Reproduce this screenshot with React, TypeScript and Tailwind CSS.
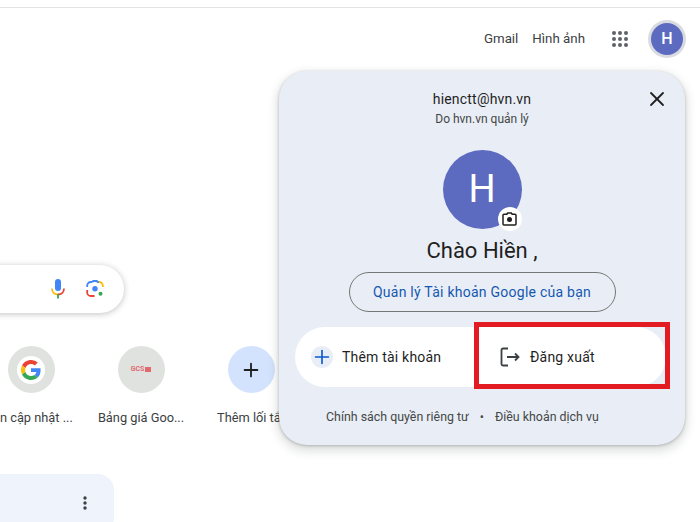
import { Plus, X } from "lucide-react"

const font = { fontFamily: "Roboto, sans-serif" }

function GoogleG({ size = 20 }: { size?: number }) {
  return (
    <svg width={size} height={size} viewBox="0 0 48 48">
      <path fill="#EA4335" d="M24 9.500c3.500 0 6.700 1.200 9.200 3.600l6.900-6.900C35.900 2.400 30.500 0 24 0 14.600 0 6.500 5.400 2.600 13.200l8 6.200C12.500 13.600 17.800 9.500 24 9.500z" />
      <path fill="#4285F4" d="M47 24.500c0-1.600-.1-3.100-.4-4.500H24v9h13c-.6 3-2.300 5.500-4.800 7.200l7.700 6C44.400 38 47 31.800 47 24.500z" />
      <path fill="#FBBC05" d="M10.600 28.600c-.5-1.500-.8-3-.8-4.600s.3-3.100.8-4.600l-8-6.200C.9 16.500 0 20.100 0 24s.9 7.500 2.600 10.800l8-6.200z" />
      <path fill="#34A853" d="M24 48c6.500 0 11.900-2.100 15.900-5.800l-7.700-6c-2.200 1.500-4.900 2.300-8.200 2.300-6.200 0-11.500-4.100-13.400-9.900l-8 6.200C6.500 42.600 14.600 48 24 48z" />
    </svg>
  )
}

function Mic() {
  return (
    <svg width="16" height="22" viewBox="0 0 16 22">
      <rect x="5" y="1" width="6" height="12" rx="3" fill="#4285F4" />
      <path d="M2 10.500c0 3.600 2.400 6 6 6" fill="none" stroke="#FBBC05" strokeWidth="1.800" />
      <path d="M14 10.500c0 3.600-2.400 6-6 6" fill="none" stroke="#EA4335" strokeWidth="1.800" />
      <rect x="7.100" y="16" width="1.800" height="4.500" fill="#34A853" />
    </svg>
  )
}

function Lens() {
  return (
    <svg width="18" height="18" viewBox="0 0 18 18" fill="none">
      <path d="M1.200 7V5.500A3.500 3.500 0 0 1 4.700 2h1.600" stroke="#4285F4" strokeWidth="1.800" />
      <path d="M6.300 2l1-1h3.400l1 1h1.200" stroke="#4285F4" strokeWidth="1.800" />
      <path d="M13 2a3.700 3.700 0 0 1 3.800 3.500V7" stroke="#FBBC05" strokeWidth="1.800" />
      <path d="M1.200 10v2.500A3.500 3.500 0 0 0 4.700 16h3.800" stroke="#EA4335" strokeWidth="1.800" />
      <circle cx="9" cy="8.800" r="2.700" fill="#4285F4" />
      <circle cx="14.500" cy="13.800" r="2" fill="#34A853" />
    </svg>
  )
}

function AppsGrid() {
  const dots = [3, 9, 15]
  return (
    <svg width="18" height="18" viewBox="0 0 18 18" fill="#5f6368">
      {dots.map((y) => dots.map((x) => <circle key={`${x}-${y}`} cx={x} cy={y} r="2" />))}
    </svg>
  )
}

function Camera() {
  return (
    <svg width="15" height="14" viewBox="0 0 15 14" fill="none">
      <path d="M4.800 2.300 5.700 1h3.600l.9 1.300H13a1 1 0 0 1 1 1V12a1 1 0 0 1-1 1H2a1 1 0 0 1-1-1V3.300a1 1 0 0 1 1-1h2.800z" stroke="#1f1f1f" strokeWidth="1.500" />
      <circle cx="7.500" cy="7.600" r="2.500" fill="#1f1f1f" />
    </svg>
  )
}

function SignOut() {
  return (
    <svg width="20" height="20" viewBox="0 0 20 20" fill="none" stroke="#3c4043" strokeWidth="1.800">
      <path d="M8 1.500H3A1.500 1.500 0 0 0 1.500 3v14A1.500 1.500 0 0 0 3 18.500h5" />
      <path d="M7 10h11.500M15 6.500l3.500 3.500-3.500 3.500" />
    </svg>
  )
}

function Shortcut({ label, children, bg }: { label: string; children: React.ReactNode; bg: string }) {
  return (
    <div className="flex w-[110px] shrink-0 flex-col items-center">
      <div className={`flex h-[47px] w-[47px] items-center justify-center rounded-full ${bg}`}>{children}</div>
      <div className="mt-[17px] w-[110px] whitespace-nowrap text-center text-[12.800px] leading-4 text-[#3c4043]">
        {label}
      </div>
    </div>
  )
}

export default function App() {
  return (
    <div className="relative h-[522px] w-[700px] overflow-hidden bg-white" style={font}>
      {/* top strip */}
      <div className="h-2 border-b border-[#e3e3e3]" />

      {/* header links */}
      <div className="flex h-[62px] items-center justify-end pr-[14px]">
        <span className="text-[13.300px] text-[#3c4043]">Gmail</span>
        <span className="ml-[14px] text-[13.300px] text-[#3c4043]">Hình ảnh</span>
        <span className="ml-[26px] flex">
          <AppsGrid />
        </span>
        <div className="ml-[19px] flex h-[38px] w-[38px] items-center justify-center rounded-full bg-[#d9dbe0]">
          <div className="flex h-[32px] w-[32px] items-center justify-center rounded-full bg-[#5c6bc0] text-[16px] font-medium text-white">
            H
          </div>
        </div>
      </div>

      {/* page content, cropped on the left */}
      <div className="ml-[-200px] w-[324px] pt-[195px]">
        <div className="flex h-[48px] items-center justify-end rounded-[24px] bg-white pr-[20px] shadow-[0_1px_6px_rgba(32,33,36,0.28)]">
          <Mic />
          <span className="ml-[20px] flex">
            <Lens />
          </span>
        </div>
      </div>

      <div className="ml-[-24px] mt-[33px] flex">
        <Shortcut label="Tin cập nhật ..." bg="bg-[#e0e2e0]">
          <span className="flex h-7 w-7 items-center justify-center rounded-full bg-white">
            <GoogleG size={20} />
          </span>
        </Shortcut>
        <Shortcut label="Bảng giá Goo..." bg="bg-[#e0e2e0]">
          <span className="flex items-center gap-[1px] text-[7px] font-bold leading-none text-[#e06a6e]">
            GCS
            <span className="h-[5px] w-[6px] bg-[#e06a6e]" />
          </span>
        </Shortcut>
        <Shortcut label="Thêm lối tắt" bg="bg-[#d3e3fd]">
          <Plus size={22} strokeWidth={2} className="text-[#1f1f1f]" />
        </Shortcut>
      </div>

      <div className="ml-[-40px] mt-[48px] flex h-[60px] w-[154px] justify-end rounded-[16px] bg-[#eff3fb] pr-[27px] pt-[22px]">
        <svg width="4" height="14" viewBox="0 0 4 14" fill="#3c4043">
          <circle cx="2" cy="2" r="1.700" />
          <circle cx="2" cy="7" r="1.700" />
          <circle cx="2" cy="12" r="1.700" />
        </svg>
      </div>

      {/* account popup */}
      <div className="absolute left-[279px] top-[71px] flex h-[374px] w-[406px] flex-col items-center rounded-[28px] bg-[#e9eef6] pt-[19px] shadow-[0_4px_8px_3px_rgba(60,64,67,0.15),0_1px_3px_rgba(60,64,67,0.3)]">
        <button className="absolute right-[16px] top-[16px] text-[#1f1f1f]">
          <X size={24} strokeWidth={1.800} />
        </button>
        <div className="text-[14px] font-[450] leading-[18px] tracking-[0.2px] text-[#1f1f1f]">hienctt@hvn.vn</div>
        <div className="mt-[3px] text-[12px] leading-4 text-[#444746]">Do hvn.vn quản lý</div>

        <div className="relative mt-[23px] flex h-[79px] w-[79px] items-center justify-center rounded-full bg-[#5c6bc0] text-[38px] text-white">
          H
          <div className="absolute bottom-[-2px] right-0 flex h-[24px] w-[24px] items-center justify-center rounded-full bg-white">
            <Camera />
          </div>
        </div>

        <div className="mt-[6px] text-[22px] leading-[32px] text-[#1f1f1f]">Chào Hiền ,</div>

        <button className="mt-[5px] flex h-[40px] w-[267px] items-center justify-center rounded-[20px] border border-[#747775] text-[14px] font-[450] tracking-[0.25px] text-[#1558b0]">
          Quản lý Tài khoản Google của bạn
        </button>

        <div className="ml-[16px] mt-[15px] flex h-[60px] w-[371px] gap-[3px] self-start">
          <div className="flex w-[180px] items-center rounded-l-[30px] bg-white pl-[16px]">
            <span className="flex h-[22px] w-[22px] items-center justify-center rounded-full bg-[#e9eef6]">
              <Plus size={22} strokeWidth={1.800} className="shrink-0 text-[#0b57d0]" />
            </span>
            <span className="ml-[9px] text-[14px] font-[450] tracking-[0.2px] text-[#1f1f1f]">Thêm tài khoản</span>
          </div>
          <div className="flex flex-1 items-center rounded-r-[30px] bg-white pl-[22px]">
            <SignOut />
            <span className="ml-[10px] text-[14px] font-[450] tracking-[0.2px] text-[#1f1f1f]">Đăng xuất</span>
          </div>
        </div>

        <div className="ml-[47px] mt-[22px] flex items-center self-start text-[12.400px] leading-4 text-[#444746]">
          <span>Chính sách quyền riêng tư</span>
          <span className="mx-[11px]">•</span>
          <span>Điều khoản dịch vụ</span>
        </div>

        {/* highlight drawn over the sign-out button */}
        <div className="absolute left-[195px] top-[251px] h-[67px] w-[196px] border-[5px] border-[#e31b23]" />
      </div>
    </div>
  )
}
